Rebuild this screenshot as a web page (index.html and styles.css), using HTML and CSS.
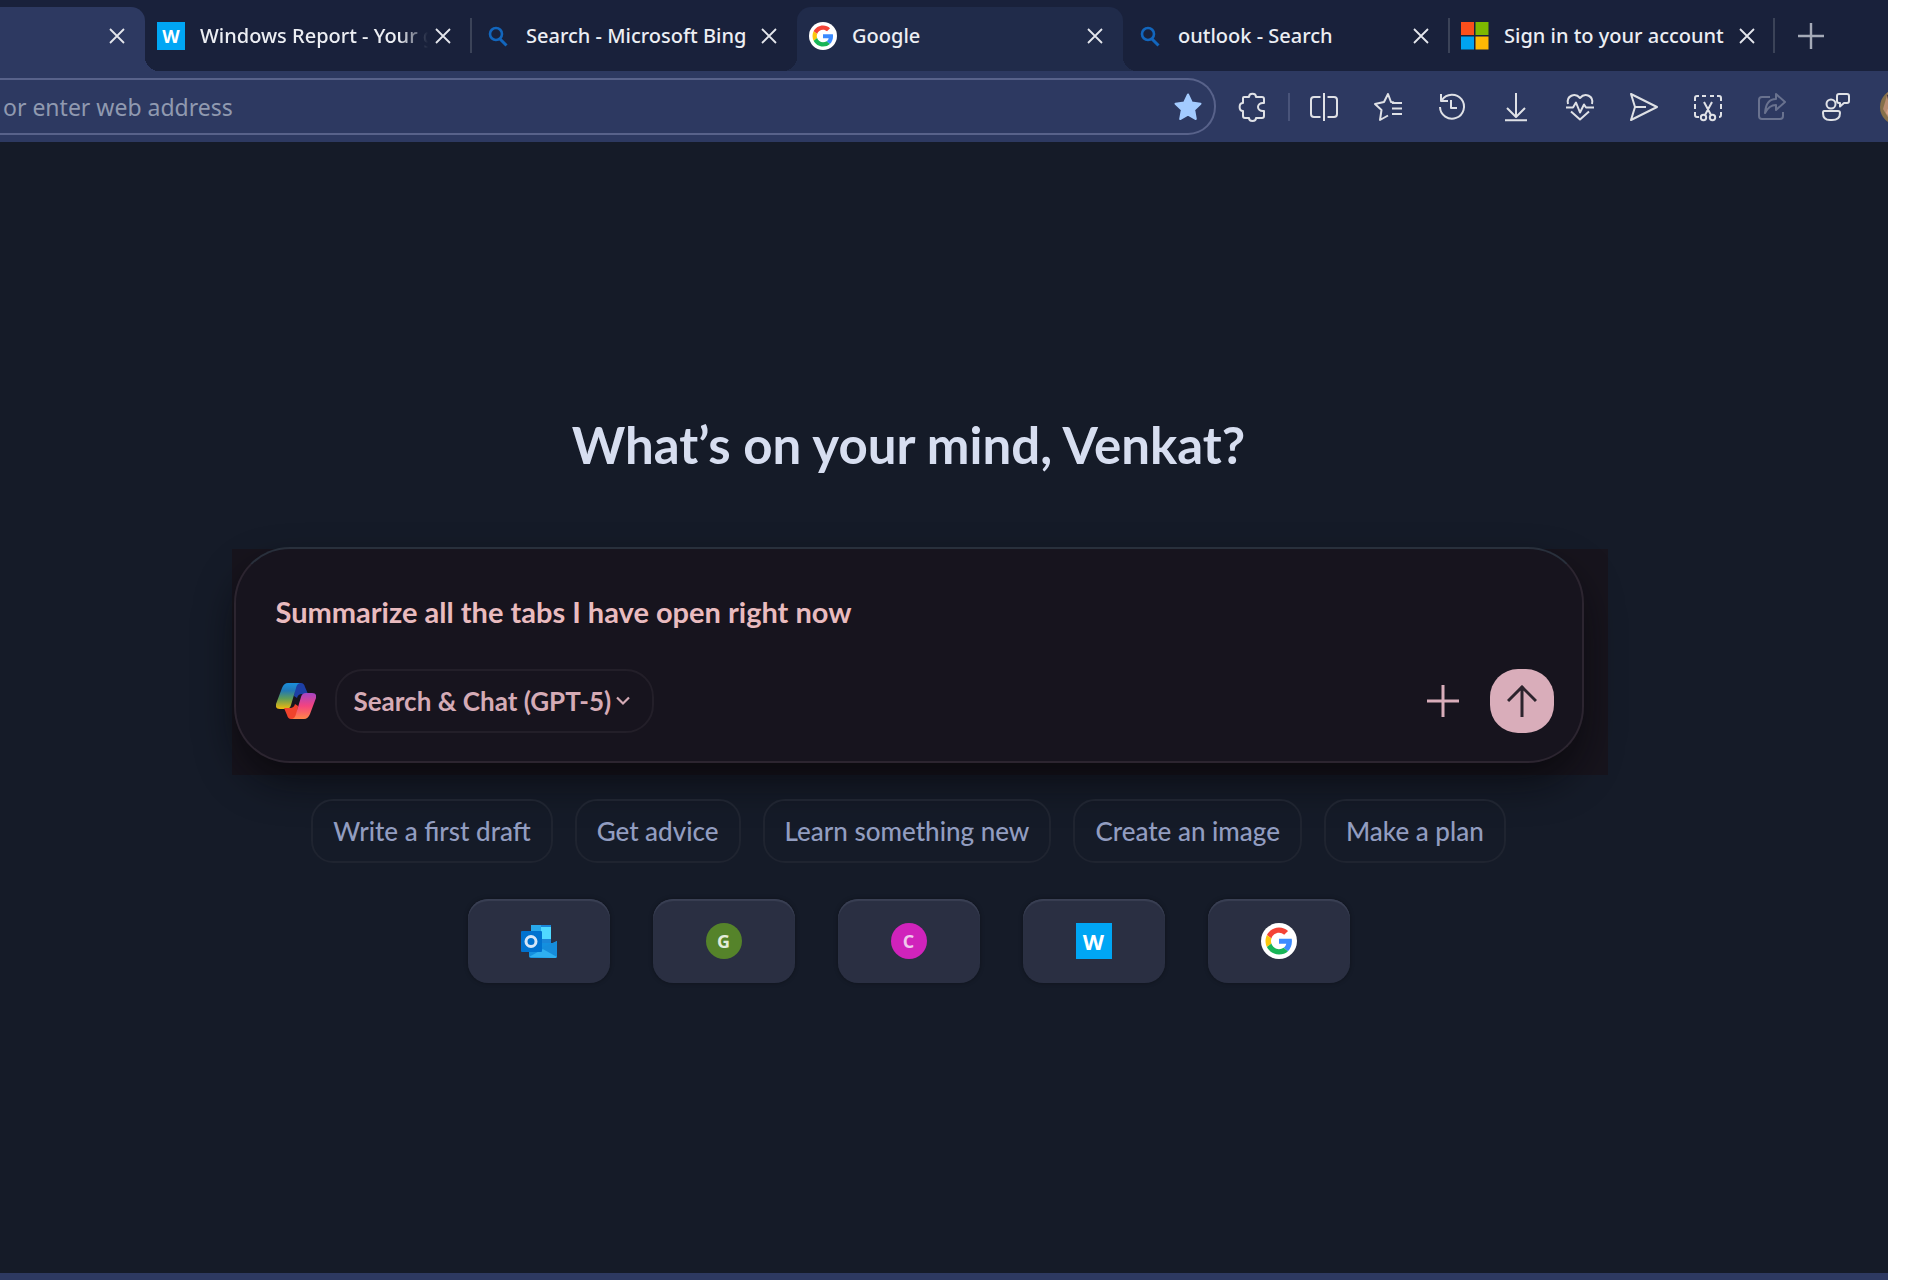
FILE: index.html
```
<!DOCTYPE html>
<html lang="en">
<head>
    <meta charset="UTF-8">
    <meta name="viewport" content="width=device-width, initial-scale=1.0">
    <title>New tab</title>
    <link rel="stylesheet" href="styles.css">
</head>
<body>
    <svg class="defs" aria-hidden="true">
        <defs>
            <linearGradient id="coolRibbon" x1="0" y1="0" x2="0" y2="1">
                <stop offset="0" stop-color="#1a8fdc"/>
                <stop offset="0.3" stop-color="#2278b4"/>
                <stop offset="0.6" stop-color="#5f9c57"/>
                <stop offset="1" stop-color="#f2b90c"/>
            </linearGradient>
            <linearGradient id="warmRibbon" x1="0" y1="1" x2="0" y2="0">
                <stop offset="0" stop-color="#a545c4"/>
                <stop offset="0.5" stop-color="#f4437f"/>
                <stop offset="1" stop-color="#ff8648"/>
            </linearGradient>
            <symbol id="close" viewBox="0 0 16 16">
                <path d="M1 1l14 14M15 1L1 15" fill="none" stroke="#e4e6ec" stroke-width="1.8"/>
            </symbol>
            <symbol id="magnifier" viewBox="0 0 28 28">
                <circle cx="13" cy="12" r="6" fill="none" stroke="#1266bd" stroke-width="2.6"/>
                <path d="M17 17l6.500 6.500" stroke="#1266bd" stroke-width="3"/>
            </symbol>
            <symbol id="google" viewBox="0 0 36 36">
                <circle cx="18" cy="18" r="18" fill="#fff"/>
                <g transform="translate(4.500 4.500) scale(.5625)">
                    <path fill="#f44336" d="M24 9.500c3.540 0 6.710 1.220 9.210 3.600l6.850-6.850C35.900 2.380 30.470 0 24 0 14.620 0 6.510 5.380 2.560 13.220l7.980 6.190C12.430 13.720 17.740 9.500 24 9.500z"/>
                    <path fill="#3b8bff" d="M46.980 24.550c0-1.570-.15-3.090-.38-4.550H24v9.020h12.940c-.58 2.960-2.260 5.480-4.780 7.180l7.730 6c4.510-4.180 7.090-10.360 7.090-17.650z"/>
                    <path fill="#fbc70c" d="M10.530 28.590c-.48-1.450-.76-2.990-.76-4.590s.27-3.140.76-4.590l-7.980-6.190C.92 16.460 0 20.120 0 24c0 3.880.92 7.540 2.560 10.780l7.970-6.190z"/>
                    <path fill="#18b557" d="M24 48c6.480 0 11.930-2.130 15.890-5.810l-7.730-6c-2.150 1.450-4.920 2.300-8.160 2.300-6.260 0-11.570-4.220-13.470-9.910l-7.980 6.190C6.510 42.620 14.620 48 24 48z"/>
                </g>
            </symbol>
            <symbol id="plus" viewBox="0 0 32 32">
                <path d="M16 0v32M0 16h32" fill="none" stroke="currentColor" stroke-width="3"/>
            </symbol>
        </defs>
    </svg>

    <header class="tab-bar">
        <div class="tab active">
            <button class="close" aria-label="Close tab"><svg><use href="#close"/></svg></button>
        </div>
        <div class="tab">
            <span class="favicon w-icon">W</span>
            <span class="title fade">Windows Report - Your g</span>
            <button class="close" aria-label="Close tab"><svg><use href="#close"/></svg></button>
        </div>
        <div class="tab divided-left">
            <svg class="favicon"><use href="#magnifier"/></svg>
            <span class="title">Search - Microsoft Bing</span>
            <button class="close" aria-label="Close tab"><svg><use href="#close"/></svg></button>
        </div>
        <div class="tab hovered">
            <svg class="favicon"><use href="#google"/></svg>
            <span class="title">Google</span>
            <button class="close" aria-label="Close tab"><svg><use href="#close"/></svg></button>
        </div>
        <div class="tab">
            <svg class="favicon"><use href="#magnifier"/></svg>
            <span class="title">outlook - Search</span>
            <button class="close" aria-label="Close tab"><svg><use href="#close"/></svg></button>
        </div>
        <div class="tab divided-left divided-right">
            <svg class="favicon" viewBox="0 0 28 28">
                <path fill="#fa4f1c" d="M0 0h13v13H0z"/>
                <path fill="#7eb900" d="M14.500 0h13v13h-13z"/>
                <path fill="#00a3f1" d="M0 14.500h13v13H0z"/>
                <path fill="#ffb803" d="M14.500 14.500h13v13h-13z"/>
            </svg>
            <span class="title">Sign in to your account</span>
            <button class="close" aria-label="Close tab"><svg><use href="#close"/></svg></button>
        </div>
        <button class="new-tab" aria-label="New tab"><svg><use href="#plus"/></svg></button>
    </header>

    <nav class="toolbar">
        <div class="address-bar">
            <input type="text" aria-label="Address" placeholder="or enter web address">
            <button class="favorite" aria-label="Favorite">
                <svg viewBox="0 0 28 28"><path fill="#a3cbff" stroke="#a3cbff" stroke-width="2" stroke-linejoin="round" d="M14 1.500l3.800 8 8.700 1.200-6.300 6.100 1.600 9.200L14 21.700 6.200 26l1.600-9.200-6.300-6.100 8.700-1.200z"/></svg>
            </button>
        </div>
        <button class="tool extensions" aria-label="Extensions">
            <svg viewBox="0 0 28 28"><path d="M5 4h5c0-4.500 7-4.500 7 0h6q2 0 2 2v4c-8-1-8 9 0 8v5q0 2-2 2h-6c0 4-7 4-7 0H6q-2 0-2-2v-5c-4.500 0-4.500-8 0-8V5q0-1 1-1z"/></svg>
        </button>
        <button class="tool" aria-label="Split screen">
            <svg viewBox="0 0 28 28"><path d="M14 0v28M10.500 4H4Q1 4 1 7v14q0 3 3 3h6.500M17.500 4H24q3 0 3 3v14q0 3-3 3h-6.500"/></svg>
        </button>
        <button class="tool" aria-label="Favorites">
            <svg viewBox="0 0 28 28"><path d="M20 9.500l-3-.5-3-8-4 8-9 2 6.500 6L6 27l8-4.500M18 10h10M18 15.500h10M18 21h10"/></svg>
        </button>
        <button class="tool" aria-label="History">
            <svg viewBox="0 0 28 28"><path d="M4 7a12 12 0 1 1-2 7M3 1v7h7M13 7v8h6"/></svg>
        </button>
        <button class="tool" aria-label="Downloads">
            <svg viewBox="0 0 28 28"><path d="M14 0v24M5 15l9 9 9-9M3 27.200h22"/></svg>
        </button>
        <button class="tool" aria-label="Browser essentials">
            <svg viewBox="0 0 28 28"><path d="M2 11C0 3 9-1 14 5c5-6 14-2 12 6M0 14.500h7l3-5 4 10 4-8 2 3h8M5 18.500l9 8 9-8"/></svg>
        </button>
        <button class="tool" aria-label="Send">
            <svg viewBox="0 0 28 28"><path d="M1 1l26 13L1 27l4-13zM5 14h11"/></svg>
        </button>
        <button class="tool" aria-label="Screenshot">
            <svg viewBox="0 0 28 28"><path d="M1 8V5q0-2 2-2h2M8 3h4M16 3h4M23 3h2q2 0 2 2v3M27 11v5M27 19v3q0 2-2 2M1 11v5M1 19v3q0 2 2 2h2M10 9l7 13M18 9l-7 13"/><circle cx="9.500" cy="24.500" r="2.700"/><circle cx="18.500" cy="24.500" r="2.700"/></svg>
        </button>
        <button class="tool" aria-label="Share" disabled>
            <svg viewBox="0 0 28 28"><path d="M12 4H4Q1 4 1 7v16q0 3 3 3h18q3 0 3-3v-4M18 1l9 8-9 8v-5q-7 0-11 8Q8 6 18 6z"/></svg>
        </button>
        <button class="tool" aria-label="Feedback">
            <svg viewBox="0 0 28 28"><circle cx="9" cy="11" r="4.500"/><path d="M2 18h14q2 0 2 2 0 7-8 7h-2q-7 0-7-7 0-2 1-2zM17 1h8q2 0 2 2v5q0 2-2 2h-3l-4 3.500V10h-1q-2 0-2-2V3q0-2 2-2z"/></svg>
        </button>
        <button class="avatar" aria-label="Profile">
            <svg viewBox="0 0 36 36"><circle cx="18" cy="18" r="18" fill="#86704a"/><path d="M8 3L3 20l6 10z" fill="#b98d71"/><path d="M7 6q7-6 10 3l-3 12-5-5z" fill="#3a2b36"/><path d="M9 17l6 4-3 9-6-6z" fill="#d6a388"/></svg>
        </button>
    </nav>

    <main class="page">
        <h1>What’s on your mind, Venkat?</h1>
        <div class="composer-panel">
            <form class="composer">
                <input class="prompt" type="text" aria-label="Message" value="Summarize all the tabs I have open right now">
                <div class="composer-row">
                    <svg class="copilot" viewBox="0 0 40 36">
                        <path fill="#1d3fa5" d="M19 0h6q3 0 4 4l3 7h-6q-4 0-5 4l-3-2z"/>
                        <path fill="url(#coolRibbon)" d="M12 0h13q-4 0-5 5l-5 17q-1 4-5 4H4q-5 0-4-5L6 5q2-5 6-5z"/>
                        <g transform="rotate(180 20 18)">
                            <path fill="#f0432c" d="M19 0h6q3 0 4 4l3 7h-6q-4 0-5 4l-3-2z"/>
                            <path fill="url(#warmRibbon)" d="M12 0h13q-4 0-5 5l-5 17q-1 4-5 4H4q-5 0-4-5L6 5q2-5 6-5z"/>
                        </g>
                    </svg>
                    <button class="mode" type="button">
                        Search &amp; Chat (GPT-5)
                        <svg viewBox="0 0 14 10"><path d="M1 1.500l6 6 6-6" fill="none" stroke="currentColor" stroke-width="2.200"/></svg>
                    </button>
                    <button class="add" type="button" aria-label="Add"><svg><use href="#plus"/></svg></button>
                    <button class="send" type="submit" aria-label="Send message">
                        <svg viewBox="0 0 30 32"><path d="M15 1v31M1 16L15 2l14 14" fill="none" stroke="currentColor" stroke-width="3"/></svg>
                    </button>
                </div>
            </form>
        </div>
        <div class="suggestions">
            <button>Write a first draft</button>
            <button>Get advice</button>
            <button>Learn something new</button>
            <button>Create an image</button>
            <button>Make a plan</button>
        </div>
        <div class="sites">
            <a href="#" aria-label="Outlook">
                <svg class="site-icon" viewBox="0 0 36 36">
                    <path fill="#1a86d8" d="M10 2h20v20H10z"/>
                    <path fill="#28a8ea" d="M10 2h10v10H10z"/>
                    <path fill="#50d9ff" d="M20 4h10v12H20z"/>
                    <path fill="#1490df" d="M8 20h28v13q0 2-2 2H10q-2 0-2-2z"/>
                    <path fill="#2fb0f0" d="M8 34l28-16v15q0 2-2 2z"/>
                    <path fill="#168ddb" d="M20 25l16-7v16z"/>
                    <rect x="0" y="8" width="21" height="21" rx="1" fill="#0072cf"/>
                    <circle cx="10" cy="18.500" r="5" fill="none" stroke="#d5e6f7" stroke-width="3"/>
                </svg>
            </a>
            <a href="#" aria-label="G site"><span class="site-icon letter green">G</span></a>
            <a href="#" aria-label="C site"><span class="site-icon letter magenta">C</span></a>
            <a href="#" aria-label="Windows Report"><span class="site-icon w-icon">W</span></a>
            <a href="#" aria-label="Google"><svg class="site-icon"><use href="#google"/></svg></a>
        </div>
    </main>
</body>
</html>
```
FILE: styles.css
```
* {
    box-sizing: border-box;
}
body {
    margin: 0;
    padding-right: 32px;
    min-height: 100vh;
    display: flex;
    flex-direction: column;
    background-color: #ffffff;
    font-family: "Noto Sans", "Open Sans", sans-serif;
    overflow-x: hidden;
}
button {
    display: flex;
    align-items: center;
    justify-content: center;
    flex: none;
    margin: 0;
    padding: 0;
    border: none;
    background: none;
    font: inherit;
    color: inherit;
    cursor: pointer;
}
input {
    border: none;
    outline: none;
    padding: 0;
    background: none;
    min-width: 0;
}
.defs {
    position: absolute;
    width: 0;
    height: 0;
}

/* tabs */
.tab-bar {
    display: flex;
    height: 71px;
    padding-top: 7px;
    background-color: #19213b;
    color: #eceef3;
    font-size: 20px;
    font-weight: 500;
}
.tab {
    position: relative;
    display: flex;
    align-items: center;
    flex: 0 1 326px;
    min-width: 0;
    padding: 0 20px 7px 12px;
    border-radius: 14px 14px 0 0;
}
.tab.active {
    flex-basis: 145px;
    flex-shrink: 0;
    border-top-left-radius: 0;
    background-color: #2d3961;
    --tab-color: #2d3961;
}
.tab.hovered {
    background-color: #202b4a;
    --tab-color: #202b4a;
}
/* curved feet of the highlighted tabs */
.tab.active::after,
.tab.hovered::after,
.tab.hovered::before {
    content: "";
    position: absolute;
    bottom: 0;
    width: 14px;
    height: 14px;
}
.tab.active::after,
.tab.hovered::after {
    left: 100%;
    background: radial-gradient(circle at 100% 0, transparent 14px, var(--tab-color) 14px);
}
.tab.hovered::before {
    right: 100%;
    background: radial-gradient(circle at 0 0, transparent 14px, var(--tab-color) 14px);
}
.divided-left::before,
.divided-right::after {
    content: "";
    position: absolute;
    top: 11px;
    left: -1px;
    width: 2px;
    height: 35px;
    background-color: #3b4358;
}
.divided-right::after {
    left: auto;
    right: 0;
}
.favicon {
    flex: none;
    width: 28px;
    height: 28px;
    margin-right: 15px;
}
.w-icon {
    display: flex;
    align-items: center;
    justify-content: center;
    background-color: #00a6f4;
    color: #ffffff;
    font-weight: 700;
    font-size: 18px;
}
.title {
    flex: 1;
    overflow: hidden;
    white-space: nowrap;
}
.title.fade {
    -webkit-mask-image: linear-gradient(to right, #000 200px, transparent 228px);
    mask-image: linear-gradient(to right, #000 200px, transparent 228px);
}
.close {
    margin-left: auto;
}
.close svg {
    width: 16px;
    height: 16px;
}
.new-tab {
    width: 72px;
    padding-bottom: 7px;
    color: #a5aab7;
}
.new-tab svg {
    width: 26px;
    height: 26px;
}

/* toolbar */
.toolbar {
    display: flex;
    align-items: center;
    height: 71px;
    overflow: hidden;
    background-color: #2d3961;
}
.address-bar {
    display: flex;
    align-items: center;
    flex: 1;
    min-width: 0;
    height: 57px;
    margin-right: 5px;
    padding: 0 12px 0 3px;
    border: 2px solid #58628a;
    border-left: none;
    border-radius: 0 28px 28px 0;
}
.address-bar input {
    flex: 1;
    color: #ffffff;
    font: 23px/32px "Noto Sans", "Open Sans", sans-serif;
}
.address-bar input::placeholder {
    color: #9099b0;
    opacity: 1;
}
.favorite svg,
.tool svg {
    display: block;
    width: 28px;
    height: 28px;
    overflow: visible;
}
.tool {
    width: 64px;
    height: 56px;
}
.tool svg {
    fill: none;
    stroke: #dfe1e6;
    stroke-width: 2;
    stroke-linejoin: round;
}
.tool:disabled svg {
    stroke: #69728f;
}
.extensions {
    width: 71px;
    padding-right: 7px;
    background: linear-gradient(#49547a, #49547a) 67px center / 2px 28px no-repeat;
}
.avatar {
    margin: 0 -28px 0 12px;
}
.avatar svg {
    width: 36px;
    height: 36px;
}

/* new tab page */
.page {
    display: flex;
    flex-direction: column;
    align-items: center;
    flex: 1;
    padding: 271px 71px 80px 0;
    border-bottom: 7px solid #2d3961;
    background-color: #151b28;
    font-family: Lato, sans-serif;
}
h1 {
    margin: 0 0 70px;
    color: #d7def0;
    font-size: 51px;
    line-height: 64px;
    font-weight: 700;
}
.composer-panel {
    position: relative;
    z-index: 0;
    width: 100%;
    max-width: 1350px;
}
/* tinted panel that shows past the rounded corners */
.composer-panel::before {
    content: "";
    position: absolute;
    inset: 2px -24px -12px -2px;
    z-index: -1;
    background-color: #17141d;
}
.composer {
    padding: 45px 28px 28px 40px;
    border: 2px solid #2c2530;
    border-top-color: #29303c;
    border-radius: 56px;
    background-color: #17141e;
    box-shadow: 0 20px 40px -4px rgba(5, 5, 8, 0.7);
}
.prompt {
    display: block;
    width: 100%;
    height: 36px;
    color: #e9bbbf;
    font: 700 29px/36px Lato, sans-serif;
}
.composer-row {
    display: flex;
    align-items: center;
    margin-top: 39px;
}
.copilot {
    flex: none;
    width: 40px;
    height: 36px;
    margin-right: 19px;
}
.mode {
    gap: 5px;
    height: 64px;
    padding: 0 22px 0 17px;
    border: 2px solid #231f29;
    border-radius: 28px;
    color: #d5abb6;
    font-size: 26px;
    font-weight: 700;
}
.mode svg {
    width: 14px;
    height: 10px;
}
.add {
    width: 64px;
    height: 64px;
    margin: 0 15px 0 auto;
    color: #d9adba;
}
.add svg {
    width: 32px;
    height: 32px;
}
.send {
    width: 64px;
    height: 64px;
    border-radius: 28px;
    background-color: #d9adba;
    color: #2c242d;
}
.send svg {
    width: 30px;
    height: 32px;
}
.suggestions {
    position: relative;
    display: flex;
    flex-wrap: wrap;
    justify-content: center;
    gap: 22px;
    margin-top: 36px;
}
.suggestions button {
    height: 64px;
    padding: 0 20px;
    border: 2px solid #1f2430;
    border-radius: 22px;
    color: #929dc0;
    font-size: 26px;
    font-weight: 500;
}
.sites {
    display: flex;
    flex-wrap: wrap;
    justify-content: center;
    gap: 43px;
    margin-top: 36px;
}
.sites a {
    display: flex;
    align-items: center;
    justify-content: center;
    width: 142px;
    height: 84px;
    border-radius: 20px;
    background-color: #2a2f42;
    box-shadow: inset 0 2px 1px #3a4054, 0 0 4px rgba(0, 0, 0, 0.35);
    text-decoration: none;
}
.site-icon {
    width: 36px;
    height: 36px;
}
.site-icon.w-icon {
    font-size: 22px;
    font-family: "Open Sans", sans-serif;
}
.letter {
    display: flex;
    align-items: center;
    justify-content: center;
    border-radius: 50%;
    color: #e3ecda;
    font: 700 18px/36px "Open Sans", sans-serif;
}
.green {
    background-color: #55832a;
}
.magenta {
    background-color: #d023bb;
    color: #f0c8ec;
}
```
